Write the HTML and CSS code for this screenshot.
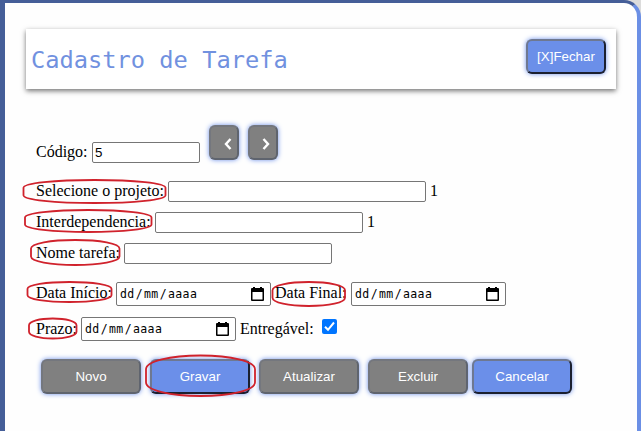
FILE: index.html
```html
<!DOCTYPE html>
<html lang="pt-BR">
<head>
<meta charset="utf-8">
<title>Cadastro de Tarefa</title>
<link rel="stylesheet" href="styles.css">
</head>
<body>
<svg class="defs" aria-hidden="true">
  <symbol id="ring" viewBox="0 0 100 100" preserveAspectRatio="none" overflow="visible">
    <path vector-effect="non-scaling-stroke" d="M0 34C0 14 22 0 50 0S100 14 100 34V66C100 86 78 100 50 100S0 86 0 66Z"/>
  </symbol>
  <symbol id="calendar" viewBox="0 0 13 14">
    <path fill-rule="evenodd" d="M2 0h2v1h5V0h2v1h1a1 1 0 0 1 1 1v11a1 1 0 0 1-1 1H1a1 1 0 0 1-1-1V2a1 1 0 0 1 1-1h1zM1.5 5v7.5h10V5z"/>
  </symbol>
</svg>
<main class="modal">
  <header class="header">
    <h1 class="title">Cadastro de Tarefa</h1>
    <button class="btn btn-primary close">[X]Fechar</button>
  </header>
  <form class="form">
    <div class="row row-code">
      <label class="label l-code" for="codigo">Código:</label>
      <input class="field f-code" id="codigo" value="5">
      <button type="button" class="btn btn-muted nav"><svg width="8" height="12" viewBox="0 0 8 12"><path d="M6.5 1 2 6l4.500 5"/></svg></button>
      <button type="button" class="btn btn-muted nav nav-next"><svg width="8" height="12" viewBox="0 0 8 12"><path d="M1.500 1 6 6l-4.500 5"/></svg></button>
    </div>
    <div class="row row-project">
      <label class="label l-project" for="projeto">Selecione o projeto:</label>
      <input class="field f-project" id="projeto"><span class="label count">1</span>
    </div>
    <div class="row row-text">
      <label class="label l-inter" for="inter">Interdependencia:</label>
      <input class="field f-text" id="inter"><span class="label count">1</span>
    </div>
    <div class="row row-text">
      <label class="label l-name" for="nome">Nome tarefa:</label>
      <input class="field f-text" id="nome">
    </div>
    <div class="row row-dates">
      <span class="label l-start">Data Início:</span>
      <div class="date"><span>dd</span><span>/</span><span>mm</span><span>/</span><span>aaaa</span><svg class="cal"><use href="#calendar"/></svg></div>
      <span class="label l-end">Data Final:</span>
      <div class="date"><span>dd</span><span>/</span><span>mm</span><span>/</span><span>aaaa</span><svg class="cal"><use href="#calendar"/></svg></div>
    </div>
    <div class="row row-deadline">
      <span class="label l-due">Prazo:</span>
      <div class="date"><span>dd</span><span>/</span><span>mm</span><span>/</span><span>aaaa</span><svg class="cal"><use href="#calendar"/></svg></div>
      <span class="label l-deliver">Entregável:</span>
      <svg class="check" width="15" height="15" viewBox="0 0 15 15"><rect width="15" height="15" rx="2"/><path d="M3 7.800 6 10.800 12 3.500"/></svg>
    </div>
    <div class="actions">
      <button type="button" class="btn btn-muted">Novo</button>
      <button type="button" class="btn btn-primary">Gravar</button>
      <button type="button" class="btn btn-muted">Atualizar</button>
      <button type="button" class="btn btn-muted">Excluir</button>
      <button type="button" class="btn btn-primary cancel">Cancelar</button>
    </div>
  </form>
</main>
<svg class="marks" width="641" height="431" aria-hidden="true">
  <use href="#ring" x="23.500" y="180" width="142" height="23"/>
  <use href="#ring" x="25" y="210" width="126.500" height="22"/>
  <use href="#ring" x="31" y="240" width="88.500" height="25"/>
  <use href="#ring" x="27.500" y="282" width="84" height="20"/>
  <use href="#ring" x="272.500" y="282" width="72.500" height="24"/>
  <use href="#ring" x="29" y="318.500" width="47.500" height="20"/>
  <use href="#ring" x="146" y="355.500" width="109" height="40.500"/>
</svg>
</body>
</html>
```
FILE: styles.css
```css
* { box-sizing: border-box; }
body {
  margin: 0;
  height: 431px;
  overflow: hidden;
  background: #dcdcdc;
  font-family: "Liberation Serif", serif;
  font-size: 16px;
  color: #000;
}
.defs { position: absolute; width: 0; height: 0; }
.modal {
  height: 431px;
  background: #fefefe;
  border-style: solid;
  border-width: 3px 4px 0 5px;
  border-color: #455e98 #6b8fe5 #6b8fe5 #455e98;
  border-top-right-radius: 17px;
  padding: 26px 21px 0;
}
.header {
  display: flex;
  align-items: flex-start;
  justify-content: space-between;
  height: 60px;
  padding: 10px 10px 0 5px;
  background: #fff;
  box-shadow: 0 2px 5px rgba(0, 0, 0, .55);
}
.title {
  margin: 6px 0 0;
  font: 400 23.7px/30px "DejaVu Sans Mono", monospace;
  color: #7191df;
}
.btn {
  width: 100px;
  height: 35px;
  padding: 0;
  border-radius: 6px;
  font: 13.33px "Liberation Sans", Arial, sans-serif;
  color: #fff;
  box-shadow: 0 0 5px #6b8fe9;
}
.btn-primary { background: #6b8fe9; border: 2px solid; border-color: #6e7891 #1b2030 #1b2030 #6e7891; }
.btn-muted { background: #808080; border: 2px solid; border-color: #74777e #5f646e #5f646e #74777e; }
.close { width: 80px; }
.form { padding: 36px 0 0 10px; }
.row { display: flex; align-items: center; height: 21px; }
.label { flex: none; line-height: 18px; margin-top: -2px; white-space: nowrap; }
.l-code { width: 56px; }
.l-project { width: 132px; }
.l-inter { width: 119px; }
.l-name { width: 88px; }
.l-start { width: 80px; }
.l-end { width: 80px; padding-left: 4px; }
.l-due { width: 45px; }
.l-deliver { width: 86px; padding-left: 4px; }
.count { padding-left: 4px; }
.field {
  height: 21px;
  padding: 1px 2px;
  border: 1px solid #767676;
  border-radius: 2px;
  background: #fff;
  font: 13.33px "Liberation Sans", Arial, sans-serif;
}
.f-code { width: 108px; }
.f-project { width: 258px; }
.f-text { width: 208px; }
.row-code { height: 35px; align-items: flex-start; }
.row-code .field { margin-top: 17px; }
.row-code .label { margin-top: 16px; line-height: 21px; }
.nav { width: 30px; margin-left: 9px; padding: 2px 0 0 7px; line-height: 0; }
.nav-next { padding-left: 5px; }
.nav path { fill: none; stroke: #fff; stroke-width: 2.4; }
.row-project { margin-top: 21px; }
.row-text { margin-top: 10px; }
.row-dates { margin-top: 18px; height: 24px; }
.row-deadline { margin-top: 11px; height: 24px; }
.row-deadline .label { margin-top: 0; }
.date {
  display: flex;
  align-items: center;
  width: 155px;
  height: 24px;
  padding: 0 6px 0 2px;
  border: 1px solid #767676;
  border-radius: 2px;
  background: #fff;
  font: 11.500px "DejaVu Sans Mono", monospace;
}
.date span { padding: 0 1px; letter-spacing: .4px; }
.date span:nth-child(even) { padding: 0; }
.cal { width: 13px; height: 14px; margin-left: auto; }
.check { margin-top: -5px; }
.check rect { fill: #0075ff; }
.check path { fill: none; stroke: #fff; stroke-width: 2; }
.actions { display: flex; gap: 9px; margin: 18px 0 0 5px; }
.cancel { margin-left: -5px; }
.marks { position: absolute; top: 0; left: 0; fill: none; stroke: #d0222c; stroke-width: 1.8; pointer-events: none; }
```
